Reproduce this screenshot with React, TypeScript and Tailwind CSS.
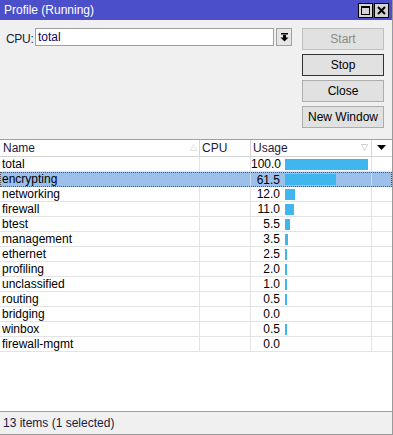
import React from "react";

const rows: [string, string, number][] = [
  ["total", "100.0", 100],
  ["encrypting", "61.5", 61.5],
  ["networking", "12.0", 12],
  ["firewall", "11.0", 11],
  ["btest", "5.5", 5.5],
  ["management", "3.5", 3.5],
  ["ethernet", "2.5", 2.5],
  ["profiling", "2.0", 2],
  ["unclassified", "1.0", 1],
  ["routing", "0.5", 0.5],
  ["bridging", "0.0", 0],
  ["winbox", "0.5", 0.5],
  ["firewall-mgmt", "0.0", 0],
];

function Btn({ label, disabled, focused }: { label: string; disabled?: boolean; focused?: boolean }) {
  return (
    <div
      className={
        "h-[22px] w-[82px] flex items-center justify-center border bg-[#e1e1e1] " +
        (focused ? "border-[#333]" : disabled ? "border-[#bfbfbf]" : "border-[#adadad]") +
        (disabled ? " text-[#8a8a8a]" : " text-black")
      }
    >
      {label}
    </div>
  );
}

export default function App() {
  return (
    <div
      className="w-[393px] h-[435px] bg-[#f0f0f0] flex flex-col text-[12px] text-black overflow-hidden border-r border-[#9a9a9a]"
      style={{ fontFamily: "'Liberation Sans', Arial, sans-serif" }}
    >
      {/* Title bar */}
      <div className="h-[20px] bg-[#4b4fc9] flex items-center justify-between pl-[4px] pr-[3px] shrink-0">
        <span className="text-white text-[12px] leading-none">Profile (Running)</span>
        <div className="flex gap-[1px]">
          <div className="w-[15px] h-[15px] bg-[#d4d4d4] border border-black flex items-center justify-center">
            <div className="w-[9px] h-[9px] border-[1.5px] border-black border-t-2" />
          </div>
          <div className="w-[15px] h-[15px] bg-[#d4d4d4] border border-black flex items-center justify-center">
            <svg width="9" height="9" viewBox="0 0 9 9">
              <path d="M1 1 L8 8 M8 1 L1 8" stroke="black" strokeWidth="2" />
            </svg>
          </div>
        </div>
      </div>

      {/* Top section */}
      <div className="h-[119px] flex shrink-0 pt-[8px]">
        <div className="flex items-start pl-[6px] w-[296px]">
          <span className="mt-[2px] w-[29px] shrink-0 text-[#1a1a40] tracking-[-0.3px]">CPU:</span>
          <div className="h-[18px] w-[239px] bg-white border border-[#a0a0a0] flex items-center px-[2px] text-[#0a0a60]">
            total
          </div>
          <div className="ml-[2px] h-[18px] w-[16px] bg-[#e6e6e6] border border-[#a0a0a0] flex items-center justify-center">
            <svg width="9" height="9" viewBox="0 0 9 9">
              <rect x="1" y="0" width="7" height="1.5" fill="black" />
              <path d="M3 2 H6 V4.5 H8.5 L4.5 8.5 L0.5 4.5 H3 Z" fill="black" />
            </svg>
          </div>
        </div>
        <div className="flex flex-col gap-[4px] ml-[6px]">
          <Btn label="Start" disabled />
          <Btn label="Stop" focused />
          <Btn label="Close" />
          <Btn label="New Window" />
        </div>
      </div>

      {/* Table */}
      <div className="flex-1 bg-white border-t border-[#a0a0a0] border-b border-b-[#a0a0a0] flex flex-col">
        {/* Header */}
        <div className="h-[17px] flex border-b border-[#d5d5d5] shrink-0 text-[#1a1a40]">
          <div className="w-[200px] border-r border-[#d5d5d5] pl-[3px] flex items-center justify-between pr-[2px]">
            <span>Name</span>
            <span className="text-[#d0d0d0] text-[9px]">△</span>
          </div>
          <div className="w-[51px] border-r border-[#d5d5d5] pl-[2px] flex items-center">CPU</div>
          <div className="w-[121px] border-r border-[#d5d5d5] pl-[2px] flex items-center justify-between pr-[3px]">
            <span>Usage</span>
            <span className="text-[#b0b0b0] text-[9px]">▽</span>
          </div>
          <div className="w-[19px] flex items-center justify-center">
            <svg width="9" height="6" viewBox="0 0 9 6">
              <path d="M0 0 H9 L4.5 5 Z" fill="black" />
            </svg>
          </div>
        </div>
        {rows.map(([name, val, pct], i) => {
          const sel = i === 1;
          return (
            <div
              key={name}
              className={
                "h-[15px] flex shrink-0 " +
                (sel ? "bg-[#9dc0ea] outline outline-1 outline-dotted outline-[#555] -outline-offset-1" : "border-b border-[#e3e3e3]")
              }
            >
              <div className={"w-[200px] pl-[2px] leading-[14px] " + (sel ? "" : "border-r border-[#e3e3e3]")}>{name}</div>
              <div className={"w-[51px] " + (sel ? "border-r border-[#c9d9ee]" : "border-r border-[#e3e3e3]")} />
              <div className={"w-[121px] flex items-center " + (sel ? "border-r border-[#c9d9ee]" : "border-r border-[#e3e3e3]")}>
                <span className="w-[29px] text-right leading-[14px]">{val}</span>
                {pct > 0 && (
                  <div className="ml-[5px] h-[11px] bg-[#3fb7ee]" style={{ width: Math.max(2, Math.round(pct * 0.83)) }} />
                )}
              </div>
              <div className="w-[19px]" />
            </div>
          );
        })}
      </div>

      {/* Status bar */}
      <div className="h-[23px] shrink-0 flex items-center pl-[3px] text-[#1a1a40] border-b border-[#9a9a9a]">
        13 items (1 selected)
      </div>
    </div>
  );
}
